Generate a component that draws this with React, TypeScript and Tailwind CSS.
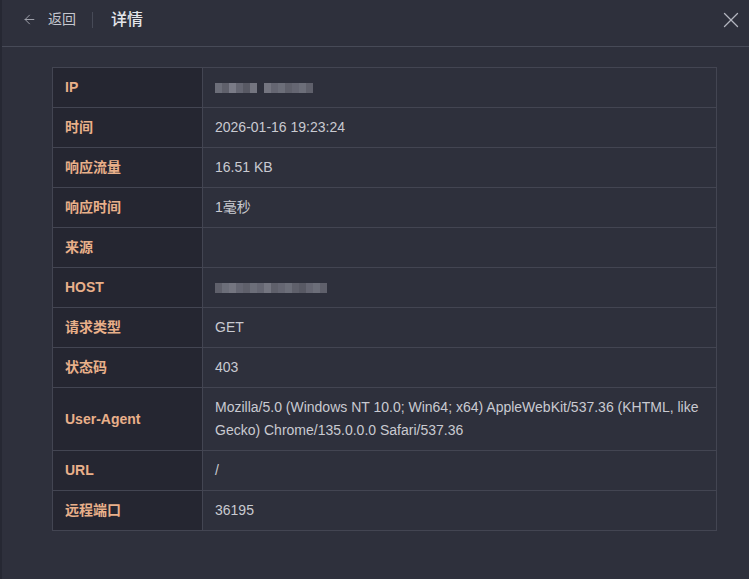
import { ArrowLeft, X } from "lucide-react";

const rows: { label: string; value?: string; blur?: number[] }[] = [
  { label: "IP", blur: [0.45, 0.35, 0.55, 0.4, 0.3, 0.5, 0, 0.5, 0.4, 0.45, 0.35, 0.4, 0.45, 0.35] },
  { label: "时间", value: "2026-01-16 19:23:24" },
  { label: "响应流量", value: "16.51 KB" },
  { label: "响应时间", value: "1毫秒" },
  { label: "来源", value: "" },
  { label: "HOST", blur: [0.35, 0.45, 0.5, 0.4, 0.35, 0.45, 0.4, 0.5, 0.35, 0.4, 0.45, 0.35, 0.3, 0.4, 0.45, 0.35] },
  { label: "请求类型", value: "GET" },
  { label: "状态码", value: "403" },
  {
    label: "User-Agent",
    value:
      "Mozilla/5.0 (Windows NT 10.0; Win64; x64) AppleWebKit/537.36 (KHTML, like Gecko) Chrome/135.0.0.0 Safari/537.36",
  },
  { label: "URL", value: "/" },
  { label: "远程端口", value: "36195" },
];

function Blur({ cells }: { cells: number[] }) {
  return (
    <div className="flex h-[10px] items-stretch">
      {cells.map((o, i) => (
        <span
          key={i}
          className="w-[7px] bg-[#b9bac4]"
          style={{ opacity: o }}
        />
      ))}
    </div>
  );
}

export default function App() {
  return (
    <div
      className="h-[579px] w-[749px] border-l-2 border-[#262833] bg-[#2e303c] text-[14px]"
      style={{ fontFamily: '"Liberation Sans", "Noto Sans CJK SC", sans-serif' }}
    >
      <header className="flex h-[47px] items-center border-b border-[#474a57] pb-[7px] pl-[20px] pr-[5px]">
        <ArrowLeft className="size-[15px] text-[#9fa1ab]" strokeWidth={1.6} />
        <span className="ml-[11px] text-[14px] text-[#c5c7cf]">返回</span>
        <span className="ml-[16px] h-[16px] w-px bg-[#474a57]" />
        <span className="ml-[18px] text-[16px] font-medium text-[#e4e5ea]">详情</span>
        <X className="ml-auto size-[26px] text-[#b3b5bf]" strokeWidth={1.2} />
      </header>

      <div className="px-[50px] pt-[20px]">
        <table className="w-[665px] border-collapse">
          <tbody>
            {rows.map((r) => (
              <tr key={r.label}>
                <td className="h-[40px] w-[150px] border border-[#434552] bg-[#252631] pl-[12px] font-bold text-[#e9b08a]">
                  {r.label}
                </td>
                <td className="h-[40px] border border-[#434552] px-[12px] py-[8px] leading-[23px] text-[#c9cad1]">
                  {r.blur ? <Blur cells={r.blur} /> : r.value}
                </td>
              </tr>
            ))}
          </tbody>
        </table>
      </div>
    </div>
  );
}
